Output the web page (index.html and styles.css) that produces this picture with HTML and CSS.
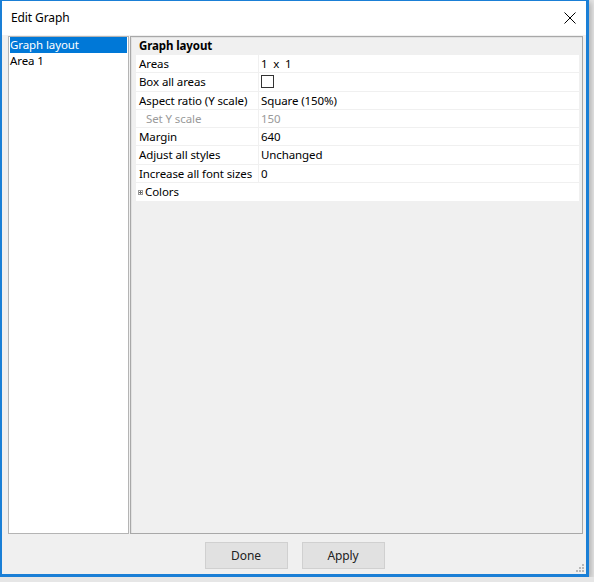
FILE: index.html
```html
<!DOCTYPE html>
<html lang="en">
<head>
    <meta charset="UTF-8">
    <title>Edit Graph</title>
    <link rel="stylesheet" href="styles.css">
</head>
<body>
    <div class="window">
        <div class="titlebar">
            <span class="title">Edit Graph</span>
            <span class="close">
                <svg width="12" height="12" viewBox="0 0 12 12"><path d="M0.5 0.5 L11.5 11.5 M11.5 0.5 L0.5 11.5" stroke="#000" stroke-width="1" fill="none"/></svg>
            </span>
        </div>
        <div class="client">
            <div class="main">
                <ul class="tree">
                    <li class="selected">Graph layout</li>
                    <li>Area 1</li>
                </ul>
                <div class="panel">
                    <div class="grid">
                        <div class="grid-head">Graph layout</div>
                        <div class="row"><span class="label">Areas</span><span class="value">1&nbsp; x&nbsp; 1</span></div>
                        <div class="row"><span class="label">Box all areas</span><span class="value"><span class="checkbox"></span></span></div>
                        <div class="row"><span class="label">Aspect ratio (Y scale)</span><span class="value">Square (150%)</span></div>
                        <div class="row disabled"><span class="label sub">Set Y scale</span><span class="value">150</span></div>
                        <div class="row"><span class="label">Margin</span><span class="value">640</span></div>
                        <div class="row"><span class="label">Adjust all styles</span><span class="value">Unchanged</span></div>
                        <div class="row"><span class="label">Increase all font sizes</span><span class="value">0</span></div>
                        <div class="row group">
                            <svg class="expander" width="5" height="5" viewBox="0 0 5 5"><rect x="0.5" y="0.5" width="4" height="4" fill="#fff" stroke="#999"/><path d="M1 2.5 H4 M2.5 1 V4" stroke="#666"/></svg>
                            Colors
                        </div>
                    </div>
                </div>
            </div>
            <div class="footer">
                <a class="button">Done</a>
                <a class="button">Apply</a>
            </div>
            <div class="grip">
                <svg width="8" height="8" viewBox="0 0 8 8" fill="#b8b8b8">
                    <rect x="6" y="0" width="2" height="2"/>
                    <rect x="3" y="3" width="2" height="2"/><rect x="6" y="3" width="2" height="2"/>
                    <rect x="0" y="6" width="2" height="2"/><rect x="3" y="6" width="2" height="2"/><rect x="6" y="6" width="2" height="2"/>
                </svg>
            </div>
        </div>
    </div>
</body>
</html>
```

FILE: styles.css
```css
html, body {
    margin: 0;
    padding: 0;
    background: #e6e6e6;
}
body {
    font-family: "Noto Sans", "Liberation Sans", sans-serif;
    font-size: 11.5px;
    letter-spacing: -0.1px;
    color: #000;
}
.window {
    width: 589px;
    height: 577px;
    box-sizing: border-box;
    border: 3px solid #1a7fd6;
    border-top-width: 1px;
    border-left-width: 2px;
    background: #f0f0f0;
    display: flex;
    flex-direction: column;
    box-shadow: 2px 2px 6px rgba(0, 0, 0, 0.25);
}
.titlebar {
    height: 34px;
    background: #fff;
    display: flex;
    align-items: center;
    justify-content: space-between;
    padding: 0 10px 0 9px;
    flex-shrink: 0;
    font-size: 12px;
}
.title {
    margin-top: -1px;
}
.close {
    display: flex;
    margin-top: -1px;
}
.client {
    flex: 1;
    display: flex;
    flex-direction: column;
    padding: 1px 3px 0 6px;
    position: relative;
}
.main {
    display: flex;
    gap: 1px;
    height: 498px;
}
.tree {
    width: 121px;
    box-sizing: border-box;
    margin: 0;
    padding: 0 1px;
    list-style: none;
    background: #fff;
    border: 1px solid #b4b4b4;
}
.tree li {
    height: 16px;
    line-height: 15px;
    padding-left: 0;
}
.tree li.selected {
    background: #0078d7;
    color: #fff;
}
.panel {
    flex: 1;
    box-sizing: border-box;
    border: 1px solid #a8a8a8;
    box-shadow: inset 1px 1px 0 #e2e2e2;
    padding: 0 3px 0 5px;
}
.grid {
    display: flex;
    flex-direction: column;
}
.grid-head {
    height: 17px;
    line-height: 17px;
    font-weight: bold;
    padding-left: 3px;
}
.row {
    display: flex;
    height: 17.25px;
    line-height: 17px;
    background: #fff;
    margin-top: 1px;
}
.label {
    width: 123px;
    padding-left: 3px;
    box-sizing: border-box;
    border-right: 1px solid #f0f0f0;
    white-space: nowrap;
}
.label.sub {
    padding-left: 10px;
}
.value {
    padding-left: 2px;
    display: flex;
    align-items: center;
}
.disabled {
    color: #9a9a9a;
}
.checkbox {
    display: inline-block;
    width: 11px;
    height: 11px;
    border: 1px solid #333;
    background: #fff;
}
.group {
    height: 18.3px;
    padding-left: 2px;
    align-items: center;
}
.expander {
    margin-right: 2px;
    margin-top: 1px;
}
.footer {
    display: flex;
    justify-content: center;
    gap: 14px;
    padding-top: 8px;
    padding-right: 2px;
    font-size: 12px;
}
.button {
    width: 83px;
    height: 27px;
    box-sizing: border-box;
    border: 1px solid #d0d0d0;
    background: #e1e1e1;
    display: flex;
    align-items: center;
    justify-content: center;
    color: #222;
    cursor: pointer;
}
.grip {
    position: absolute;
    right: 2px;
    bottom: 2px;
    display: flex;
}
```
